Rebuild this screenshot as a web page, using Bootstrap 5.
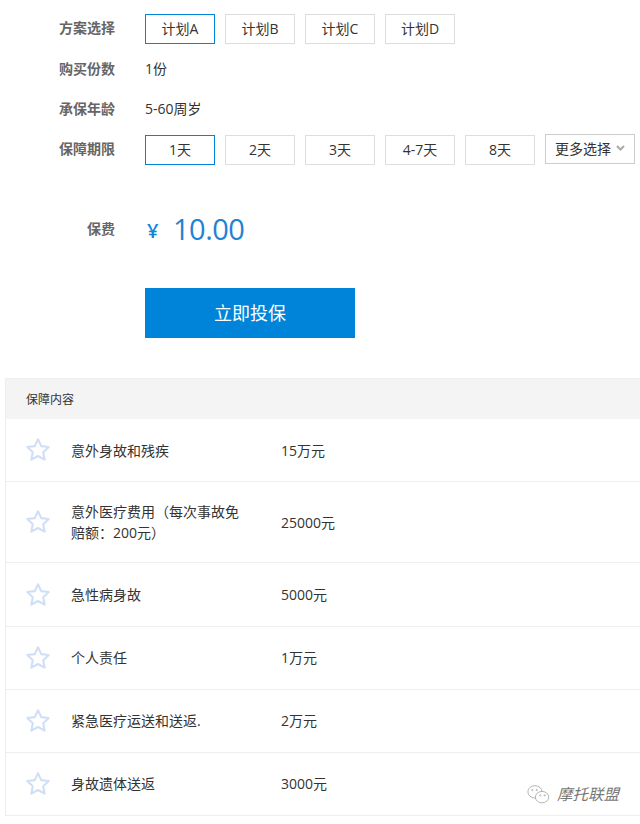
<!DOCTYPE html>
<html lang="zh">
<head>
<meta charset="utf-8">
<title>保险方案</title>
<link href="https://cdn.jsdelivr.net/npm/bootstrap@5.3.0/dist/css/bootstrap.min.css" rel="stylesheet">
<style>
html,body{height:824px;overflow:hidden}
body{background:#fff;color:#333;font-family:"Open Sans","Noto Sans CJK SC",sans-serif;font-size:14px;line-height:1.5}
.plan-form{padding:14px 0 0 0;height:378px}
.form-line{display:flex;align-items:center;height:30px;margin-bottom:10px}
.form-line.gap-first{margin-bottom:11px}
.field-name{width:115px;text-align:right;margin-right:30px;padding-bottom:4px;color:#666;font-weight:700;flex:none}
.price-line .field-name{padding-bottom:2px}
.field-val{padding-bottom:4px}
.opt-btn{width:70px;height:30px;margin-right:10px;padding:0 0 1px;border:1px solid #ddd;border-radius:0;background:#fff;color:#333;font-size:14px;flex:none;line-height:26px}
.opt-btn.picked{border-color:#0084d9}
.more-btn{width:90px;height:30px;margin:-2px 0 0 0;padding:0 0 2px;border:1px solid #ccc;border-radius:0;background:#fff;color:#333;font-size:14px;display:flex;align-items:center;justify-content:center;gap:5px;flex:none}
.price-line{display:flex;align-items:center;height:40px;margin-top:44px}
.yen{color:#0f86d8;font-size:20px;font-weight:600;width:29px;padding-top:4px;padding-left:2px;line-height:1.5}
.price{color:#2382d2;font-size:29px;letter-spacing:-.5px;line-height:40px;font-family:"Open Sans",sans-serif;margin-left:-1px}
.buy-btn{display:block;width:210px;height:50px;margin:39px 0 0 145px;padding:0;border:0;border-radius:0;background:#0084d9;color:#fff;font-size:18px}
.cover-box{margin-left:5px;border:solid #eee;border-width:1px 0 0 1px;border-radius:0;background:#fff}
.cover-head{height:40px;background:#f4f4f4;padding-left:20px;padding-top:1px;display:flex;align-items:center;font-size:12px}
.cover-row{display:flex;align-items:center;border-bottom:1px solid #eee;padding-left:19px;height:63px}
.cover-row.tall{height:81px}
.cover-row.wide{height:64px}
.cover-row.lifted span{margin-top:-2px}
.cover-row svg{width:26px;height:26px;flex:none;margin-right:20px}
.cover-name{width:175px;margin-right:35px;flex:none;line-height:21px}
.watermark{position:absolute;left:527px;top:783px;display:flex;align-items:center;gap:7px;color:#777;font-size:15.500px;font-style:italic;font-weight:400}
.watermark svg{width:23px;height:23px}
</style>
</head>
<body>
<div class="plan-form">
  <div class="form-line gap-first"><span class="field-name">方案选择</span>
    <button class="btn opt-btn picked">计划A</button><button class="btn opt-btn">计划B</button><button class="btn opt-btn">计划C</button><button class="btn opt-btn">计划D</button></div>
  <div class="form-line"><span class="field-name">购买份数</span><span class="field-val">1份</span></div>
  <div class="form-line"><span class="field-name">承保年龄</span><span class="field-val">5-60周岁</span></div>
  <div class="form-line"><span class="field-name">保障期限</span>
    <button class="btn opt-btn picked">1天</button><button class="btn opt-btn">2天</button><button class="btn opt-btn">3天</button><button class="btn opt-btn">4-7天</button><button class="btn opt-btn">8天</button>
    <button class="btn more-btn">更多选择<svg width="9" height="6" viewBox="0 0 9 6"><path d="M1 1l3.500 3.500L8 1" fill="none" stroke="#aaa" stroke-width="2"/></svg></button></div>
  <div class="price-line"><span class="field-name">保费</span><span class="yen">¥</span><span class="price">10.00</span></div>
  <button class="btn buy-btn">立即投保</button>
</div>
<div class="cover-box">
  <div class="cover-head">保障内容</div>
  <div class="cover-row"><svg viewBox="0 0 25 25"><use href="#st"/></svg><span class="cover-name">意外身故和残疾</span><span>15万元</span></div>
  <div class="cover-row tall"><svg viewBox="0 0 25 25"><use href="#st"/></svg><span class="cover-name">意外医疗费用（每次事故免赔额：200元）</span><span>25000元</span></div>
  <div class="cover-row wide"><svg viewBox="0 0 25 25"><use href="#st"/></svg><span class="cover-name">急性病身故</span><span>5000元</span></div>
  <div class="cover-row lifted"><svg viewBox="0 0 25 25"><use href="#st"/></svg><span class="cover-name">个人责任</span><span>1万元</span></div>
  <div class="cover-row lifted"><svg viewBox="0 0 25 25"><use href="#st"/></svg><span class="cover-name">紧急医疗运送和送返.</span><span>2万元</span></div>
  <div class="cover-row lifted"><svg viewBox="0 0 25 25"><use href="#st"/></svg><span class="cover-name">身故遗体送返</span><span>3000元</span></div>
</div>
<svg width="0" height="0" class="position-absolute"><defs><path id="st" d="M12.500 2.200l3.100 6.600 7.200.9-5.300 5 1.400 7.100-6.400-3.500-6.400 3.500 1.400-7.100-5.300-5 7.200-.9z" fill="none" stroke="#cfdff6" stroke-width="2" stroke-linejoin="round"/></defs></svg>
<div class="watermark"><svg viewBox="0 0 26 24" fill="#fff" stroke="#aaa" stroke-width="1"><ellipse cx="9" cy="9" rx="8" ry="7"/><ellipse cx="17" cy="15" rx="7.500" ry="6.500"/><circle cx="6" cy="7" r=".7"/><circle cx="11" cy="7" r=".7"/><circle cx="15" cy="13" r=".7"/><circle cx="20" cy="13" r=".7"/></svg><span>摩托联盟</span></div>
</body>
</html>
